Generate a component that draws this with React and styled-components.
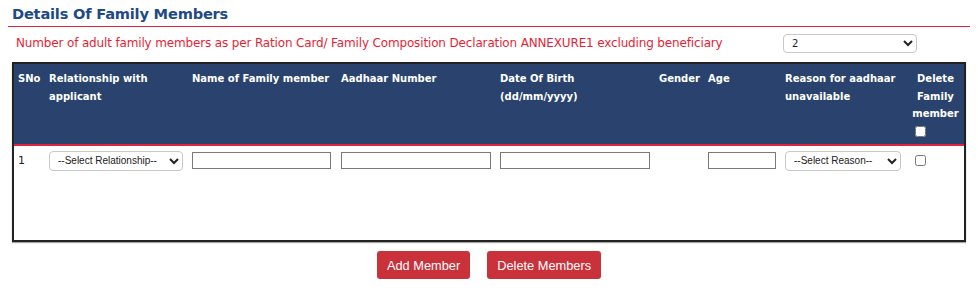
import React from 'react';
import styled, { createGlobalStyle } from 'styled-components';

const GlobalStyle = createGlobalStyle`
	body {
		margin: 0;
		background: #fff;
		font-family: 'DejaVu Sans', Verdana, sans-serif;
	}
`;

const Page = styled.div`
	width: 978px;
	padding: 4px 8px 0 8px;
	box-sizing: border-box;
`;

const Title = styled.h3`
	margin: 0;
	padding: 0 0 3px 4px;
	font-size: 14.6px;
	letter-spacing: -0.2px;
	line-height: 19px;
	font-weight: bold;
	color: #1f4a84;
	border-bottom: 1px solid #e0223c;
	width: 962px;
	box-sizing: border-box;
`;

const CountRow = styled.div`
	display: grid;
	grid-template-columns: 767px 134px;
	align-items: center;
	padding: 6px 0 0 8px;
	height: 20px;
`;

const Note = styled.span`
	font-size: 12px;
	color: #e61e36;
	letter-spacing: -0.15px;
	white-space: nowrap;
`;

const Select = styled.select`
	width: ${(props) => props.w || '134px'};
	height: ${(props) => props.h || '20px'};
	font-family: ${(props) => (props.arial ? "'Liberation Sans', Arial, sans-serif" : "'DejaVu Sans', sans-serif")};
	font-size: 10px;
	color: #222;
	border: 1px solid #c8c8c8;
	border-radius: 4px;
	background: #fff;
	padding: 0 4px;
	margin: 0;
`;

const TableBox = styled.div`
	margin: 9px 0 0 4px;
	width: 954px;
	height: 180px;
	border: 2px solid #222;
	box-sizing: border-box;
	box-shadow: 0 1px 1px rgba(0, 0, 0, 0.35);
`;

const Table = styled.table`
	width: 950px;
	table-layout: fixed;
	border-collapse: collapse;
`;

const Th = styled.th`
	background: #29436e;
	color: #fff;
	font-size: 10px;
	font-weight: bold;
	line-height: 17.5px;
	text-align: ${(props) => (props.center ? 'center' : 'left')};
	vertical-align: top;
	padding: 6px 4px 4px 4px;
	border-bottom: 2px solid #e0223c;
`;

const Td = styled.td`
	padding: 5px 4px 4px 4px;
	font-size: 11px;
	color: #222;
	vertical-align: middle;
`;

const TextBox = styled.input`
	width: ${(props) => props.w};
	height: 17px;
	box-sizing: border-box;
	border: 1px solid #7a7a7a;
	border-radius: 0;
	margin: 0;
	padding: 0 2px;
`;

const Check = styled.input`
	margin: 3px 3px 3px 4px;
	width: 11px;
	height: 11px;
	display: block;
`;

const Actions = styled.div`
	display: flex;
	justify-content: center;
	gap: 17px;
	margin-top: 9px;
`;

const Button = styled.button`
	background: #c9313b;
	color: #fff;
	border: none;
	border-radius: 3px;
	height: 28px;
	padding: 0 10px;
	font-family: 'Liberation Sans', Arial, sans-serif;
	font-size: 12.8px;
`;

const columns = [31, 143, 149, 159, 159, 49, 77, 126, 57];

export default function App() {
	return (
		<Page>
			<GlobalStyle />
			<Title>Details Of Family Members</Title>
			<CountRow>
				<Note>
					Number of adult family members as per Ration Card/ Family Composition Declaration ANNEXURE1
					excluding beneficiary
				</Note>
				<Select defaultValue='2' h='19px'>
					<option value='1'>1</option>
					<option value='2'>2</option>
					<option value='3'>3</option>
				</Select>
			</CountRow>
			<TableBox>
				<Table>
					<colgroup>
						{columns.map((w, i) => (
							<col key={i} style={{ width: w }} />
						))}
					</colgroup>
					<thead>
						<tr>
							<Th>SNo</Th>
							<Th>Relationship with applicant</Th>
							<Th>Name of Family member</Th>
							<Th>Aadhaar Number</Th>
							<Th>
								Date Of Birth
								<br />
								(dd/mm/yyyy)
							</Th>
							<Th>Gender</Th>
							<Th>Age</Th>
							<Th>Reason for aadhaar unavailable</Th>
							<Th center>
								Delete Family member
								<Check type='checkbox' />
							</Th>
						</tr>
					</thead>
					<tbody>
						<tr>
							<Td>1</Td>
							<Td>
								<Select arial w='134px'>
									<option>--Select Relationship--</option>
								</Select>
							</Td>
							<Td>
								<TextBox w='139px' />
							</Td>
							<Td>
								<TextBox w='150px' />
							</Td>
							<Td>
								<TextBox w='150px' />
							</Td>
							<Td />
							<Td>
								<TextBox w='68px' />
							</Td>
							<Td>
								<Select arial w='116px'>
									<option>--Select Reason--</option>
								</Select>
							</Td>
							<Td>
								<Check type='checkbox' />
							</Td>
						</tr>
					</tbody>
				</Table>
			</TableBox>
			<Actions>
				<Button>Add Member</Button>
				<Button>Delete Members</Button>
			</Actions>
		</Page>
	);
}
